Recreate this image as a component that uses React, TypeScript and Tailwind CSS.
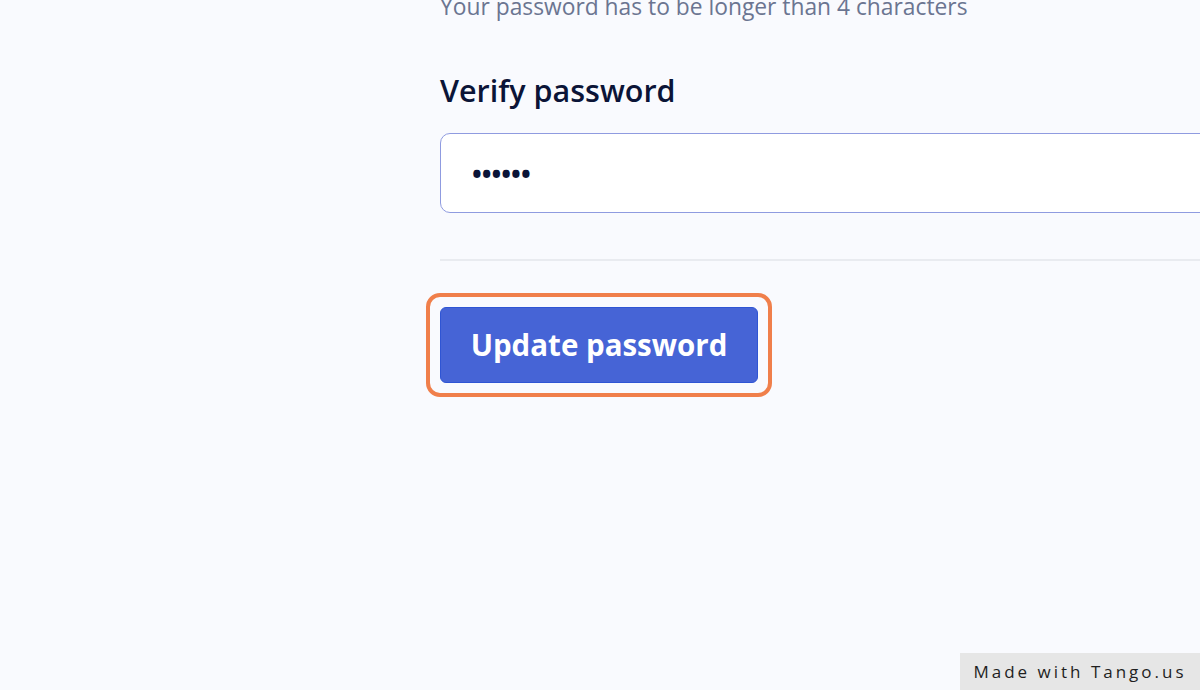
import React from 'react';

const App: React.FC = () => {
    return (
        <div
            className="relative h-[690px] w-[1200px] overflow-hidden bg-[#f9fafe]"
            style={{ fontFamily: '"Open Sans", "Noto Sans", sans-serif' }}
        >
            <div className="flex flex-col pl-[440px]">
                <p className="-mt-[8px] text-[22.8px] leading-[30px] text-[#6b7591]">
                    Your password has to be longer than 4 characters
                </p>

                <label className="mt-[50px] text-[30.5px] font-semibold leading-[36px] text-[#0b1437]">
                    Verify password
                </label>

                <div className="mt-[25px] flex h-[80px] w-[800px] items-center rounded-[10px] border border-[#8f9be0] bg-white pl-[31px]">
                    <span className="translate-y-[1px] text-[26px] font-bold leading-none text-[#0b1437]">••••••</span>
                </div>

                <div className="mt-[46px] h-[2px] w-[800px] bg-[#e9ebf0]"></div>

                <div className="ml-[-14px] mt-[32px] w-fit rounded-[14px] border-[4px] border-[#f07f4b] p-[10px]">
                    <button className="flex h-[76px] w-[318px] items-center justify-center rounded-[6px] border border-[#2f55d4] bg-[#4664d6] text-[29.5px] font-bold text-white">
                        Update password
                    </button>
                </div>
            </div>

            <div className="absolute bottom-0 right-0 flex h-[37px] w-[240px] items-center justify-center bg-[#e6e6e6]">
                <span className="text-[17px] tracking-[3px] text-[#1f1f1f]">Made with Tango.us</span>
            </div>
        </div>
    );
};

export default App;
